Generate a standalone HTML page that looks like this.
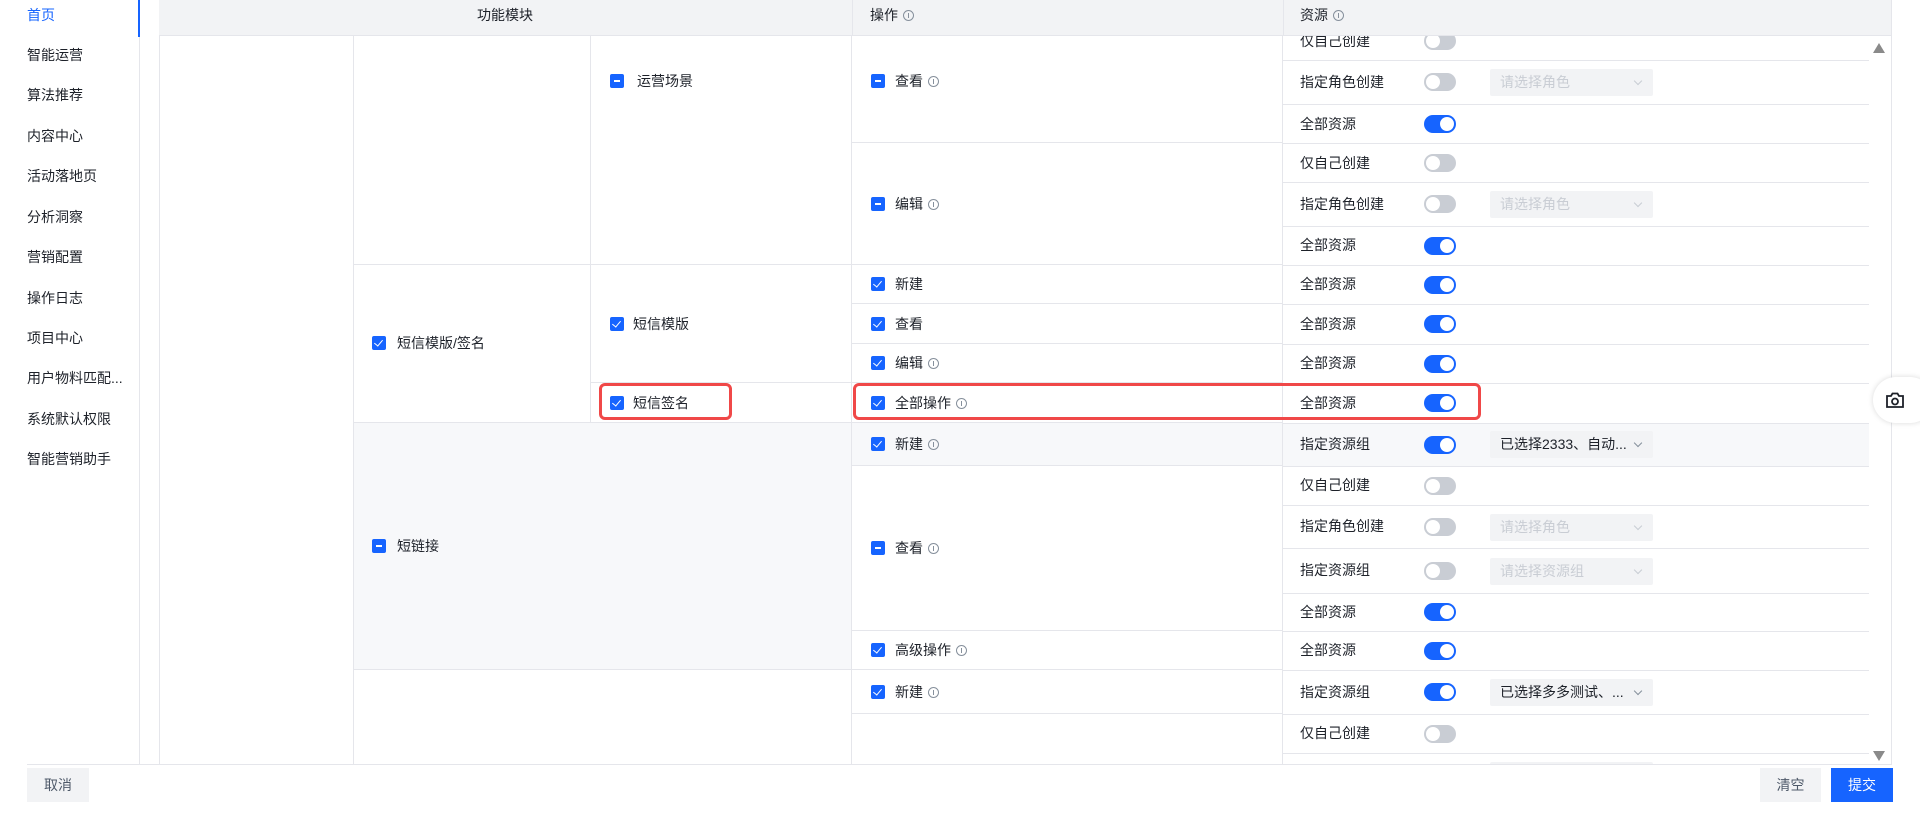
<!DOCTYPE html>
<html><head><meta charset="utf-8"><style>
body{margin:0;width:1920px;height:819px;overflow:hidden;background:#fff;font-family:"Liberation Sans","Noto Sans CJK SC",sans-serif;position:relative}
.a{position:absolute}
.c{position:absolute;box-sizing:border-box;border-right:1px solid #e5e6eb;border-bottom:1px solid #e5e6eb}
.t{position:absolute;font-size:14px;color:#1d2129;line-height:20px;white-space:nowrap}
.cb{position:absolute;width:14px;height:14px;background:#1664ff;border-radius:2px}
.cb.ck::after{content:"";position:absolute;left:4px;top:1.5px;width:4px;height:7px;border:solid #fff;border-width:0 1.6px 1.6px 0;transform:rotate(40deg)}
.cb.mn::after{content:"";position:absolute;left:4px;top:6px;width:6px;height:2px;background:#fff}
.i{display:inline-block;width:11px;height:11px;border:1px solid #86909c;border-radius:50%;box-sizing:border-box;margin-left:5px;vertical-align:-1px;position:relative}
.i::after{content:"";position:absolute;left:4px;top:2px;width:1px;height:5px;background:#86909c}
.sw{position:absolute;width:32px;height:18px;border-radius:9px;background:#c9cdd4}
.sw::after{content:"";position:absolute;top:2px;left:2px;width:14px;height:14px;border-radius:50%;background:#fff}
.sw.on{background:#1664ff}.sw.on::after{left:16px}
.sel{position:absolute;width:163px;height:27px;background:#f2f3f5;border-radius:2px;font-size:14px;line-height:27px;color:#c9cdd4;padding-left:10px;box-sizing:border-box;white-space:nowrap}
.sel.v{color:#1d2129}
.sel::after{content:"";position:absolute;right:12px;top:9px;width:5px;height:5px;border:solid #86909c;border-width:0 1px 1px 0;transform:rotate(45deg)}
.sel:not(.v)::after{border-color:#c9cdd4}
.side{position:absolute;left:27px;font-size:14px;color:#1d2129;line-height:20px}
.red{position:absolute;border:3px solid #f04848;border-radius:6px;box-sizing:border-box}
</style></head><body>
<!-- sidebar -->
<div class="a" style="left:139px;top:0;width:1px;height:764px;background:#e5e6eb"></div>
<div class="a" style="left:138px;top:0;width:2px;height:37px;background:#1664ff"></div>
<div class="side" style="top:5px;color:#1664ff">首页</div>
<div class="side" style="top:45px">智能运营</div>
<div class="side" style="top:85px">算法推荐</div>
<div class="side" style="top:126px">内容中心</div>
<div class="side" style="top:166px">活动落地页</div>
<div class="side" style="top:207px">分析洞察</div>
<div class="side" style="top:247px">营销配置</div>
<div class="side" style="top:288px">操作日志</div>
<div class="side" style="top:328px">项目中心</div>
<div class="side" style="top:368px">用户物料匹配...</div>
<div class="side" style="top:409px">系统默认权限</div>
<div class="side" style="top:449px">智能营销助手</div>

<!-- header -->
<div class="a" style="left:159px;top:0;width:1733px;height:36px;background:#f2f3f5;border-bottom:1px solid #e5e6eb;box-sizing:border-box"></div>
<div class="a" style="left:852px;top:0;width:1px;height:36px;background:#e5e6eb"></div>
<div class="a" style="left:1283px;top:0;width:1px;height:36px;background:#e5e6eb"></div>
<div class="t" style="left:477px;top:5px">功能模块</div>
<div class="t" style="left:870px;top:5px">操作<span class="i"></span></div>
<div class="t" style="left:1300px;top:5px">资源<span class="i"></span></div>

<!-- body -->
<div class="a" style="left:0;top:36px;width:1920px;height:728px;overflow:hidden">
<div class="a" style="left:0;top:-36px;width:1920px;height:820px">
<div class="c" style="left:159px;top:36px;width:195px;height:740px;border-left:1px solid #e5e6eb"></div>
<div class="c" style="left:354px;top:36px;width:237px;height:229px"></div>
<div class="c" style="left:354px;top:265px;width:237px;height:158px"></div>
<div class="c" style="left:354px;top:423px;width:498px;height:247px;background:#f7f8fa"></div>
<div class="c" style="left:354px;top:670px;width:498px;height:120px"></div>
<div class="c" style="left:591px;top:36px;width:261px;height:229px"></div>
<div class="c" style="left:591px;top:265px;width:261px;height:118px"></div>
<div class="c" style="left:591px;top:383px;width:261px;height:40px"></div>
<!-- ops -->
<div class="c" style="left:852px;top:36px;width:431px;height:107px"></div>
<div class="c" style="left:852px;top:143px;width:431px;height:122px"></div>
<div class="c" style="left:852px;top:265px;width:431px;height:39px"></div>
<div class="c" style="left:852px;top:304px;width:431px;height:40px"></div>
<div class="c" style="left:852px;top:344px;width:431px;height:39px"></div>
<div class="c" style="left:852px;top:383px;width:431px;height:40px"></div>
<div class="c" style="left:852px;top:423px;width:431px;height:43px;background:#f7f8fa"></div>
<div class="c" style="left:852px;top:466px;width:431px;height:165px"></div>
<div class="c" style="left:852px;top:631px;width:431px;height:39px"></div>
<div class="c" style="left:852px;top:670px;width:431px;height:44px"></div>
<div class="c" style="left:852px;top:714px;width:431px;height:80px"></div>
<!-- resources -->
<div class="a" style="left:1283px;top:423px;width:586px;height:43px;background:#f7f8fa"></div>
<div class="a" style="left:1283px;top:60px;width:586px;height:1px;background:#e5e6eb"></div>
<div class="a" style="left:1283px;top:104px;width:586px;height:1px;background:#e5e6eb"></div>
<div class="a" style="left:1283px;top:143px;width:586px;height:1px;background:#e5e6eb"></div>
<div class="a" style="left:1283px;top:182px;width:586px;height:1px;background:#e5e6eb"></div>
<div class="a" style="left:1283px;top:226px;width:586px;height:1px;background:#e5e6eb"></div>
<div class="a" style="left:1283px;top:265px;width:586px;height:1px;background:#e5e6eb"></div>
<div class="a" style="left:1283px;top:304px;width:586px;height:1px;background:#e5e6eb"></div>
<div class="a" style="left:1283px;top:344px;width:586px;height:1px;background:#e5e6eb"></div>
<div class="a" style="left:1283px;top:383px;width:586px;height:1px;background:#e5e6eb"></div>
<div class="a" style="left:1283px;top:423px;width:586px;height:1px;background:#e5e6eb"></div>
<div class="a" style="left:1283px;top:466px;width:586px;height:1px;background:#e5e6eb"></div>
<div class="a" style="left:1283px;top:505px;width:586px;height:1px;background:#e5e6eb"></div>
<div class="a" style="left:1283px;top:548px;width:586px;height:1px;background:#e5e6eb"></div>
<div class="a" style="left:1283px;top:593px;width:586px;height:1px;background:#e5e6eb"></div>
<div class="a" style="left:1283px;top:631px;width:586px;height:1px;background:#e5e6eb"></div>
<div class="a" style="left:1283px;top:670px;width:586px;height:1px;background:#e5e6eb"></div>
<div class="a" style="left:1283px;top:714px;width:586px;height:1px;background:#e5e6eb"></div>
<div class="a" style="left:1283px;top:753px;width:586px;height:1px;background:#e5e6eb"></div>

<!-- level labels -->
<div class="cb mn" style="left:610px;top:74px"></div><div class="t" style="left:637px;top:71px">运营场景</div>
<div class="cb ck" style="left:372px;top:336px"></div><div class="t" style="left:397px;top:333px">短信模版/签名</div>
<div class="cb ck" style="left:610px;top:317px"></div><div class="t" style="left:633px;top:314px">短信模版</div>
<div class="cb ck" style="left:610px;top:396px"></div><div class="t" style="left:633px;top:393px">短信签名</div>
<div class="cb mn" style="left:372px;top:539px"></div><div class="t" style="left:397px;top:536px">短链接</div>

<!-- ops labels -->
<div class="cb mn" style="left:871px;top:74px"></div><div class="t" style="left:895px;top:71px">查看<span class="i"></span></div>
<div class="cb mn" style="left:871px;top:197px"></div><div class="t" style="left:895px;top:194px">编辑<span class="i"></span></div>
<div class="cb ck" style="left:871px;top:277px"></div><div class="t" style="left:895px;top:274px">新建</div>
<div class="cb ck" style="left:871px;top:317px"></div><div class="t" style="left:895px;top:314px">查看</div>
<div class="cb ck" style="left:871px;top:356px"></div><div class="t" style="left:895px;top:353px">编辑<span class="i"></span></div>
<div class="cb ck" style="left:871px;top:396px"></div><div class="t" style="left:895px;top:393px">全部操作<span class="i"></span></div>
<div class="cb ck" style="left:871px;top:437px"></div><div class="t" style="left:895px;top:434px">新建<span class="i"></span></div>
<div class="cb mn" style="left:871px;top:541px"></div><div class="t" style="left:895px;top:538px">查看<span class="i"></span></div>
<div class="cb ck" style="left:871px;top:643px"></div><div class="t" style="left:895px;top:640px">高级操作<span class="i"></span></div>
<div class="cb ck" style="left:871px;top:685px"></div><div class="t" style="left:895px;top:682px">新建<span class="i"></span></div>

<!-- resource labels -->
<div class="t" style="left:1300px;top:31px">仅自己创建</div><div class="sw" style="left:1424px;top:32px"></div>
<div class="t" style="left:1300px;top:72px">指定角色创建</div><div class="sw" style="left:1424px;top:73px"></div><div class="sel" style="left:1490px;top:69px">请选择角色</div>
<div class="t" style="left:1300px;top:114px">全部资源</div><div class="sw on" style="left:1424px;top:115px"></div>
<div class="t" style="left:1300px;top:153px">仅自己创建</div><div class="sw" style="left:1424px;top:154px"></div>
<div class="t" style="left:1300px;top:194px">指定角色创建</div><div class="sw" style="left:1424px;top:195px"></div><div class="sel" style="left:1490px;top:191px">请选择角色</div>
<div class="t" style="left:1300px;top:235px">全部资源</div><div class="sw on" style="left:1424px;top:237px"></div>
<div class="t" style="left:1300px;top:274px">全部资源</div><div class="sw on" style="left:1424px;top:276px"></div>
<div class="t" style="left:1300px;top:314px">全部资源</div><div class="sw on" style="left:1424px;top:315px"></div>
<div class="t" style="left:1300px;top:353px">全部资源</div><div class="sw on" style="left:1424px;top:355px"></div>
<div class="t" style="left:1300px;top:393px">全部资源</div><div class="sw on" style="left:1424px;top:394px"></div>
<div class="t" style="left:1300px;top:434px">指定资源组</div><div class="sw on" style="left:1424px;top:436px"></div><div class="sel v" style="left:1490px;top:431px">已选择2333、自动...</div>
<div class="t" style="left:1300px;top:475px">仅自己创建</div><div class="sw" style="left:1424px;top:477px"></div>
<div class="t" style="left:1300px;top:516px">指定角色创建</div><div class="sw" style="left:1424px;top:518px"></div><div class="sel" style="left:1490px;top:514px">请选择角色</div>
<div class="t" style="left:1300px;top:560px">指定资源组</div><div class="sw" style="left:1424px;top:562px"></div><div class="sel" style="left:1490px;top:558px">请选择资源组</div>
<div class="t" style="left:1300px;top:602px">全部资源</div><div class="sw on" style="left:1424px;top:603px"></div>
<div class="t" style="left:1300px;top:640px">全部资源</div><div class="sw on" style="left:1424px;top:642px"></div>
<div class="t" style="left:1300px;top:682px">指定资源组</div><div class="sw on" style="left:1424px;top:683px"></div><div class="sel v" style="left:1490px;top:679px">已选择多多测试、...</div>
<div class="t" style="left:1300px;top:723px">仅自己创建</div><div class="sw" style="left:1424px;top:725px"></div>
<div class="sel" style="left:1490px;top:762px"></div>
</div>
</div>

<!-- scrollbar -->
<div class="a" style="left:1891px;top:0;width:1px;height:764px;background:#e5e6eb"></div>
<div class="a" style="left:1873px;top:43px;width:0;height:0;border-left:6px solid transparent;border-right:6px solid transparent;border-bottom:10px solid #8a8a8a"></div>
<div class="a" style="left:1873px;top:751px;width:0;height:0;border-left:6px solid transparent;border-right:6px solid transparent;border-top:10px solid #8a8a8a"></div>

<!-- red boxes -->
<div class="red" style="left:599px;top:383px;width:133px;height:37px"></div>
<div class="red" style="left:853px;top:383px;width:628px;height:37px"></div>

<!-- camera -->
<div class="a" style="left:1873px;top:377px;width:60px;height:46px;background:#fff;border-radius:23px;box-shadow:0 0 6px rgba(0,0,0,.15)"></div>
<svg class="a" style="left:1886px;top:392px" width="18" height="16" viewBox="0 0 18 16"><path d="M1 4h4l1.5-2.5h5L13 4h4v11H1z" fill="none" stroke="#1d2129" stroke-width="1.8"/><circle cx="9" cy="9.5" r="3" fill="none" stroke="#1d2129" stroke-width="1.8"/></svg>

<!-- footer -->
<div class="a" style="left:27px;top:764px;width:1865px;height:1px;background:#e5e6eb"></div>
<div class="a" style="left:27px;top:768px;width:62px;height:34px;background:#f2f3f5;font-size:14px;line-height:34px;text-align:center;color:#4e5969">取消</div>
<div class="a" style="left:1760px;top:768px;width:61px;height:34px;background:#f2f3f5;font-size:14px;line-height:34px;text-align:center;color:#4e5969">清空</div>
<div class="a" style="left:1831px;top:768px;width:62px;height:34px;background:#1664ff;font-size:14px;line-height:34px;text-align:center;color:#fff">提交</div>
</body></html>
